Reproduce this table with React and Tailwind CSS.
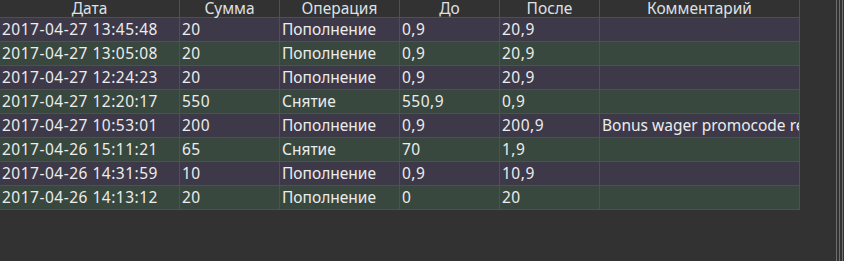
import React from "react";

const rows = [
  ["2017-04-27 13:45:48", "20", "Пополнение", "0,9", "20,9", ""],
  ["2017-04-27 13:05:08", "20", "Пополнение", "0,9", "20,9", ""],
  ["2017-04-27 12:24:23", "20", "Пополнение", "0,9", "20,9", ""],
  ["2017-04-27 12:20:17", "550", "Снятие", "550,9", "0,9", ""],
  ["2017-04-27 10:53:01", "200", "Пополнение", "0,9", "200,9", "Bonus wager promocode reward"],
  ["2017-04-26 15:11:21", "65", "Снятие", "70", "1,9", ""],
  ["2017-04-26 14:31:59", "10", "Пополнение", "0,9", "10,9", ""],
  ["2017-04-26 14:13:12", "20", "Пополнение", "0", "20", ""],
];

const headers = ["Дата", "Сумма", "Операция", "До", "После", "Комментарий"];
const widths = ["w-[180px]", "w-[100px]", "w-[120px]", "w-[100px]", "w-[100px]", "w-[200px]"];
const track = ["tracking-[0.5px]", "tracking-[0.5px]", "", "tracking-[0.5px]", "tracking-[0.5px]", ""];

export default function App() {
  return (
    <div
      className="w-[844px] h-[261px] bg-[#323232] flex overflow-hidden text-[15.5px]"
      style={{ fontFamily: '"Noto Sans", "Open Sans", sans-serif' }}
    >
      <div className="w-[800px] flex flex-col">
        <div className="flex h-[18px] border-b border-[#505050]">
          {headers.map((h, i) => (
            <div
              key={i}
              className={`${widths[i]} shrink-0 border-r border-[#505050] text-center text-[#dfe0e6] leading-[16px] whitespace-nowrap`}
            >
              {h}
            </div>
          ))}
        </div>
        {rows.map((r, ri) => (
          <div
            key={ri}
            className={`flex h-[24px] border-b border-[#505050] ${ri % 2 === 0 ? "bg-[#3d3949]" : "bg-[#38483f]"}`}
          >
            {r.map((c, ci) => (
              <div
                key={ci}
                className={`${widths[ci]} ${track[ci]} shrink-0 border-r border-[#505050] pl-[2px] text-[#ececec] leading-[23px] overflow-hidden whitespace-nowrap`}
              >
                {c}
              </div>
            ))}
          </div>
        ))}
      </div>
      <div className="ml-[36px] flex gap-[2px] h-full">
        <div className="w-px h-full bg-[#6e6e6e]" />
        <div className="w-px h-full bg-[#6e6e6e]" />
        <div className="w-px h-full bg-[#6e6e6e]" />
      </div>
    </div>
  );
}
